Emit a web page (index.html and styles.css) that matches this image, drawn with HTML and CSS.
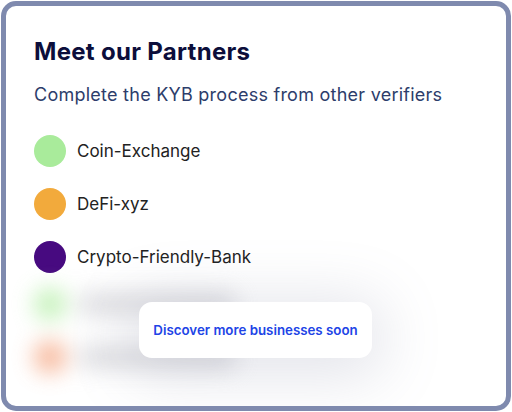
FILE: index.html
```html
<!DOCTYPE html>
<html>
<head>
<meta charset="utf-8">
<link rel="stylesheet" href="styles.css">
</head>
<body>
<div class="frame">
  <div class="card">
    <h1 class="title">Meet our Partners</h1>
    <p class="subtitle">Complete the KYB process from other verifiers</p>
    <ul class="list partners">
      <li class="item"><span class="dot green"></span><span class="name">Coin-Exchange</span></li>
      <li class="item"><span class="dot orange"></span><span class="name">DeFi-xyz</span></li>
      <li class="item"><span class="dot purple"></span><span class="name">Crypto-Friendly-Bank</span></li>
    </ul>
    <div class="more">
      <ul class="list blurred">
        <li class="item"><span class="dot lightgreen"></span><span class="bar"></span></li>
        <li class="item"><span class="dot salmon"></span><span class="bar"></span></li>
      </ul>
      <div class="popup">Discover more businesses soon</div>
    </div>
  </div>
</div>
</body>
</html>
```
FILE: styles.css
```css
* { box-sizing: border-box; }
html, body { margin: 0; padding: 0; background: #fff; }
body { width: 512px; height: 412px; padding: 1px; font-family: Inter, "Noto Sans", sans-serif; }
.frame {
  width: 510px;
  height: 410px;
  border: 5px solid #7f8aae;
  border-radius: 15px;
  background: #fff;
  overflow: hidden;
}
.card { padding: 31px 0 0 28px; }
.title {
  margin: 0;
  font-size: 24px;
  font-weight: 700;
  letter-spacing: 0.3px;
  color: #0c0e3b;
  line-height: 30px;
}
.subtitle {
  margin: 16px 0 0;
  font-size: 18px;
  letter-spacing: 0.25px;
  color: #2d3d6b;
  line-height: 24px;
}
.list { list-style: none; margin: 0; padding: 0; }
.partners { margin-top: 17px; }
.item { display: flex; align-items: center; gap: 11px; height: 53px; }
.dot { width: 32px; height: 32px; border-radius: 50%; flex: none; }
.green { background: #a9eb9b; }
.orange { background: #f2aa3c; }
.purple { background: #470a80; }
.lightgreen { background: #b4eea6; }
.salmon { background: #f5a47f; }
.name { font-size: 17px; color: #222; }
.more { position: relative; margin-top: -6px; }
.blurred { filter: blur(11px); opacity: 0.8; }
.bar { width: 160px; height: 24px; background: #d8d8dc; border-radius: 12px; }
.popup {
  position: absolute;
  left: 105px;
  top: 25px;
  width: 233px;
  height: 56px;
  background: #fff;
  border-radius: 13px;
  box-shadow: 0 8px 60px 12px rgba(120, 125, 155, 0.2);
  display: flex;
  align-items: center;
  justify-content: center;
  font-size: 13.3px;
  font-weight: 600;
  color: #2144e6;
}
```
